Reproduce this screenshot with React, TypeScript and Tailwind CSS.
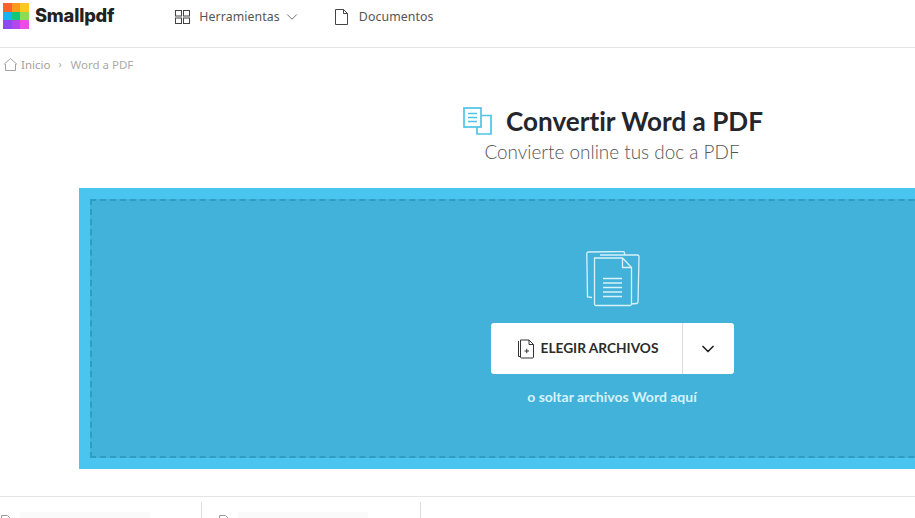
import { ChevronDown } from 'lucide-react';

function Logo() {
  const colors = ['#f9622c', '#fb9a1c', '#fdc91e', '#17b4f2', '#12c77a', '#8ddc55', '#8a4bf0', '#b446ee', '#ee4ae6'];
  return (
    <div className="grid h-[26px] w-[26px] grid-cols-3 grid-rows-3">
      {colors.map((c) => (
        <div key={c} style={{ backgroundColor: c }} />
      ))}
    </div>
  );
}

function FileRow() {
  return (
    <div className="flex items-start gap-[9px]">
      <svg width="10" height="8" viewBox="0 0 10 8" fill="none" stroke="#9a9a9a" strokeWidth="1" className="mt-[13px]">
        <path d="M.5 8V.5h6l3 3V8" />
      </svg>
      <div className="mt-[10px] h-[8px] w-[130px] bg-[#fafafa]" />
    </div>
  );
}

export default function App() {
  return (
    <div className="h-[518px] w-[915px] overflow-hidden bg-white font-['Noto_Sans',sans-serif] text-[#333]">
      <header className="flex h-[48px] items-center border-b border-[#e4e4e4] pb-[13px]">
        <div className="ml-[3px] flex items-center gap-[6px] pb-[2px]">
          <Logo />
          <span className="font-['Inter',sans-serif] text-[18.3px] font-extrabold tracking-[-0.2px] text-[#222]">Smallpdf</span>
        </div>
        <div className="ml-[60px] flex items-center gap-[8px]">
          <svg width="17" height="16" viewBox="0 0 17 16" fill="none" stroke="#444" strokeWidth="1">
            <rect x="1.5" y="1.5" width="6" height="5.5" />
            <rect x="9.5" y="1.5" width="6" height="5.5" />
            <rect x="1.5" y="9" width="6" height="5.5" />
            <rect x="9.5" y="9" width="6" height="5.5" />
          </svg>
          <span className="text-[12.3px] tracking-[0.1px] text-[#555]">Herramientas</span>
          <ChevronDown className="-ml-[5px] h-[18px] w-[18px] text-[#555]" strokeWidth={1.1} />
        </div>
        <div className="ml-[33px] flex items-center gap-[10px]">
          <svg width="15" height="18" viewBox="0 0 15 18" fill="none" stroke="#444" strokeWidth="1">
            <path d="M1.5 1.500h8l4 4v11h-12z" />
            <path d="M9.500 1.500v4h4" />
          </svg>
          <span className="text-[12.3px] tracking-[0.1px] text-[#555]">Documentos</span>
        </div>
      </header>

      <nav className="mt-[8px] flex items-center pl-[3px] text-[11.5px] text-[#aaa]">
        <svg width="15" height="15" viewBox="0 0 15 15" fill="none" stroke="#999" strokeWidth="0.9">
          <path d="M.8 7.500 7.500 1.500l6.700 6" />
          <path d="M2.500 7v6.500h10V7" />
        </svg>
        <span className="ml-[3px] text-[#a0a0a0]">Inicio</span>
        <span className="mx-[8px] text-[10px]">›</span>
        <span className="ml-[1px] text-[#aaa]">Word a PDF</span>
      </nav>

      <div className="ml-[79px] mt-[30px] w-[1066px]">
        <div className="flex flex-col items-center">
          <div className="flex items-center gap-[14px] pl-[2px]">
            <svg width="29" height="28" viewBox="0 0 29 28" fill="none" stroke="#4fc3e8" strokeWidth="1.7">
              <path d="M14 8.500h14v18.500H14V20" />
              <rect x="1" y="1" width="17" height="19" fill="#fff" />
              <path d="M5 6.500h9M5 10.500h9M5 14.500h9" strokeWidth="1.300" />
            </svg>
            <h1 className="font-['Lato',sans-serif] text-[26.1px] font-bold leading-[36px] tracking-[0.01px] text-[#24262b]">Convertir Word a PDF</h1>
          </div>
          <p className="font-['Lato',sans-serif] text-[18.9px] font-light leading-[26px] tracking-[0.01px] text-[#555]">
            Convierte online tus doc a PDF
          </p>
        </div>

        <div className="mt-[23px] h-[281px] bg-[#4ac5ef] p-[11px]">
          <div className="flex h-full flex-col items-center border-2 border-dashed border-[#2f9cc4] bg-[#42b2da] pt-[50px]">
            <svg width="54" height="56" viewBox="0 0 54 56" fill="none" stroke="#d8f1fa" strokeWidth="1.300" className="ml-[1px]">
              <path d="M6 46.500 1.500 46 .8 2.500q0-1.500 1.500-1.500L37 .5q1.500 0 1.500 1.500v2" />
              <path d="M14 4h37.500q1.500 0 1.500 1.500L52 51q0 1.500-1.500 1.500L45 53" />
              <path d="M8.500 7h28l9 9.500V53q0 1.500-1.500 1.500H10q-1.500 0-1.500-1.500z" fill="#42b2da" />
              <path d="M36.500 7v9.500h9" />
              <path d="M17 27.500h19M17 32h19M17 36.500h19M17 41h19M17 45.500h19" />
            </svg>
            <div className="mt-[16px] flex h-[51px] w-[243px] rounded-[3px] bg-white">
              <div className="flex flex-1 items-center justify-center gap-[6px] pl-[3px]">
                <svg width="18" height="20" viewBox="0 0 18 20" fill="none" stroke="#333" strokeWidth="1">
                  <path d="M3 17.500H1.500V2" />
                  <path d="M3.500 1h8.500l4.500 4.500V18q0 1-1 1h-11q-1 0-1-1z" />
                  <path d="M12 1v4.500h4.500" />
                  <path d="M7.500 12h4.500M9.750 9.750v4.500" />
                </svg>
                <span className="font-['Lato',sans-serif] text-[13.7px] font-bold text-[#2b2b2b]">ELEGIR ARCHIVOS</span>
              </div>
              <div className="flex w-[52px] items-center justify-center border-l border-[#dcdcdc]">
                <ChevronDown className="h-[20px] w-[20px] text-[#222]" strokeWidth={2} />
              </div>
            </div>
            <p className="mt-[14px] font-['Lato',sans-serif] text-[14px] font-bold leading-[18px] text-[#d6f2fb]">
              o soltar archivos Word aquí
            </p>
          </div>
        </div>
      </div>

      <div className="mt-[27px] border-t border-[#e4e4e4] pt-[5px]">
        <div className="flex h-[20px] items-start">
          <div className="h-full w-[202px] border-r border-[#ddd] pl-[1px]">
            <FileRow />
          </div>
          <div className="h-full w-[219px] border-r border-[#ddd] pl-[17px]">
            <FileRow />
          </div>
        </div>
      </div>
    </div>
  );
}
